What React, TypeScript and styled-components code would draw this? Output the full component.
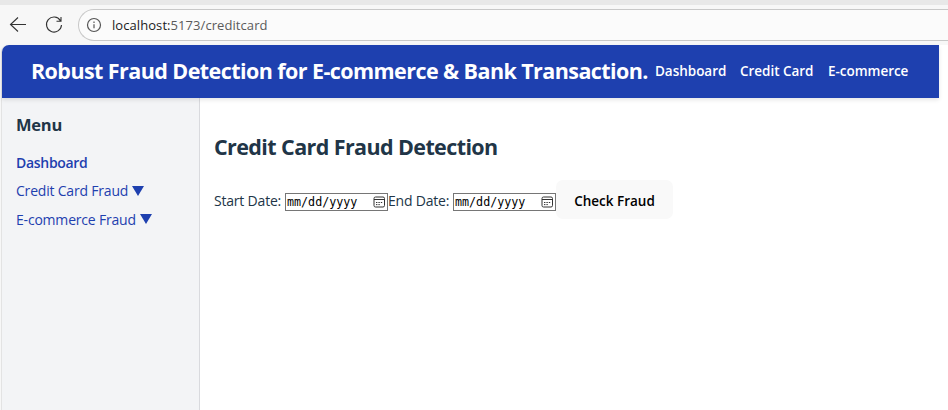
import React from "react";
import styled, { createGlobalStyle } from "styled-components";

const GlobalStyle = createGlobalStyle`
  * { box-sizing: border-box; }
  html, body { margin: 0; background: #fff; overflow: hidden; }
  body { font-family: "Segoe UI", "Open Sans", "Noto Sans", sans-serif; color: #213547; font-size: 14px; }
  h1, h2, h3 { margin: 0; }
`;

const Browser = styled.div`
  height: 410px;
  display: flex;
  flex-direction: column;
  background: #f7f7f7;
  white-space: nowrap;
`;
const TabStrip = styled.div`
  height: 5px;
  flex: none;
  background: #e8e8e8;
`;
const Toolbar = styled.div`
  height: 40px;
  flex: none;
  display: flex;
  align-items: center;
  padding-left: 8px;
`;
const ToolIcon = styled.svg`
  width: 20px;
  height: 20px;
  flex: none;
  margin-right: 16px;
  fill: none;
  stroke: #333;
  stroke-width: 1.1;
`;
const AddressBar = styled.div`
  flex: 1;
  height: 32px;
  margin-left: -2px;
  display: flex;
  align-items: center;
  border: 1px solid #c8c8c8;
  border-right: 0;
  border-radius: 16px 0 0 16px;
  background: #fbfbfb;
  padding-left: 7px;
`;
const InfoIcon = styled.svg`
  width: 16px;
  height: 16px;
  margin-right: 10px;
  fill: none;
  stroke: #555;
  stroke-width: 1.2;
`;
const Url = styled.span`
  color: #5a5a5a;
  font-size: 13px;
  letter-spacing: 0.07px;
  b { font-weight: 400; color: #1b1b1b; }
`;
const Page = styled.div`
  flex: 1;
  min-height: 0;
  margin-left: 1px;
  display: flex;
  flex-direction: column;
  border-left: 1px solid #e3e3e3;
  border-radius: 7px 0 0 0;
  background: #fff;
`;
const Header = styled.header`
  position: relative;
  width: 937px;
  padding: 0 29px 0 29px;
  height: 53px;
  flex: none;
  display: flex;
  align-items: center;
  justify-content: space-between;
  border-radius: 7px 0 0 0;
  background: #1e40af;
  box-shadow: 0 2px 4px rgba(0, 0, 0, 0.1);
  color: #fff;
`;
const Title = styled.h1`
  font-size: 21.5px;
  line-height: 30px;
  font-weight: 700;
  letter-spacing: -0.57px;
  margin-top: -1px;
`;
const Nav = styled.nav`
  display: flex;
  gap: 14px;
  padding-bottom: 2px;
`;
const NavLink = styled.a<{ $width: number }>`
  width: ${(p) => p.$width}px;
  font-size: 13.5px;
  font-weight: 600;
  letter-spacing: -0.03px;
`;
const Columns = styled.div`
  flex: 1;
  display: flex;
`;
const Sidebar = styled.aside`
  width: 198px;
  padding: 15px 14px;
  background: #f3f4f6;
  border-right: 1px solid #d9dade;
`;
const MenuTitle = styled.h3`
  font-size: 16.5px;
  line-height: 23px;
  margin-bottom: 12px;
  letter-spacing: -0.25px;
`;
const MenuLink = styled.a<{ $strong?: boolean }>`
  display: flex;
  align-items: center;
  height: 28.5px;
  color: #1e40af;
  font-size: 14px;
  font-weight: ${(p) => (p.$strong ? 600 : 400)};
  letter-spacing: ${(p) => (p.$strong ? -0.3 : -0.2)}px;
`;
const Caret = styled.svg`
  width: 12px;
  height: 10px;
  margin-left: 4px;
  fill: #1e40af;
`;
const Main = styled.main`
  flex: 1;
  padding: 33px 14px;
`;
const Heading = styled.h2`
  font-size: 21.5px;
  line-height: 32px;
  letter-spacing: -0.6px;
`;
const Form = styled.div`
  display: flex;
  align-items: center;
  margin-top: 17px;
  height: 39px;
`;
const Label = styled.label<{ $width: number }>`
  width: ${(p) => p.$width}px;
  flex: none;
  padding-top: 2px;
  font-size: 14px;
  letter-spacing: -0.2px;
`;
const DateField = styled.div`
  width: 103px;
  height: 18px;
  margin-top: 5px;
  flex: none;
  display: flex;
  align-items: center;
  justify-content: space-between;
  border: 1px solid #767676;
  background: #fff;
  padding: 0 2px 0 1px;
  color: #000;
  font: 11.7px/16px "DejaVu Sans Mono", monospace;
`;
const CalendarIcon = styled.svg`
  width: 12px;
  height: 12px;
  flex: none;
  fill: none;
  stroke: #333;
`;
const Button = styled.button`
  width: 117px;
  height: 39px;
  flex: none;
  border: 0;
  border-radius: 7px;
  padding: 3px 0 0;
  background: #f9f9f9;
  color: #000;
  font: 600 13.5px "Segoe UI", "Open Sans", sans-serif;
`;

function DateInput() {
  return (
    <DateField>
      <span>mm/dd/yyyy</span>
      <CalendarIcon viewBox="0 0 12 12">
        <rect x="1" y="1" width="10.5" height="10" rx="1.5" />
        <path d="M1 3.5h10.5" />
        <path d="M3 6.5h1.4M5.4 6.5h1.4M7.8 6.5h1.4M3 8.6h1.4M5.4 8.6h1.4" />
      </CalendarIcon>
    </DateField>
  );
}

function MenuItem({ label }: { label: string }) {
  return (
    <MenuLink>
      {label}
      <Caret viewBox="0 0 12 10"><path d="M0 0h12L6 10z" /></Caret>
    </MenuLink>
  );
}

export default function App() {
  return (
    <>
      <GlobalStyle />
      <Browser>
        <TabStrip />
        <Toolbar>
          <ToolIcon viewBox="0 0 20 20"><path d="M18 9.5H2.5M10 2.5l-7.5 7 7.5 7" /></ToolIcon>
          <ToolIcon viewBox="0 0 20 20"><path d="M16.4 5.6A7.5 7.5 0 1 0 17.5 10M17 2v4.3h-4.5" /></ToolIcon>
          <AddressBar>
            <InfoIcon viewBox="0 0 16 16">
              <circle cx="8" cy="8" r="6.5" />
              <path d="M8 7.2v4M8 4.6v1.3" />
            </InfoIcon>
            <Url><b>localhost:</b>5173/creditcard</Url>
          </AddressBar>
        </Toolbar>
        <Page>
          <Header>
            <Title>Robust Fraud Detection for E-commerce &amp; Bank Transaction.</Title>
            <Nav>
              <NavLink $width={71}>Dashboard</NavLink>
              <NavLink $width={74}>Credit Card</NavLink>
              <NavLink $width={82}>E-commerce</NavLink>
            </Nav>
          </Header>
          <Columns>
            <Sidebar>
              <MenuTitle>Menu</MenuTitle>
              <MenuLink $strong>Dashboard</MenuLink>
              <MenuItem label="Credit Card Fraud" />
              <MenuItem label="E-commerce Fraud" />
            </Sidebar>
            <Main>
              <Heading>Credit Card Fraud Detection</Heading>
              <Form>
                <Label $width={71}>Start Date:</Label>
                <DateInput />
                <Label $width={65}>End Date:</Label>
                <DateInput />
                <Button>Check Fraud</Button>
              </Form>
            </Main>
          </Columns>
        </Page>
      </Browser>
    </>
  );
}
